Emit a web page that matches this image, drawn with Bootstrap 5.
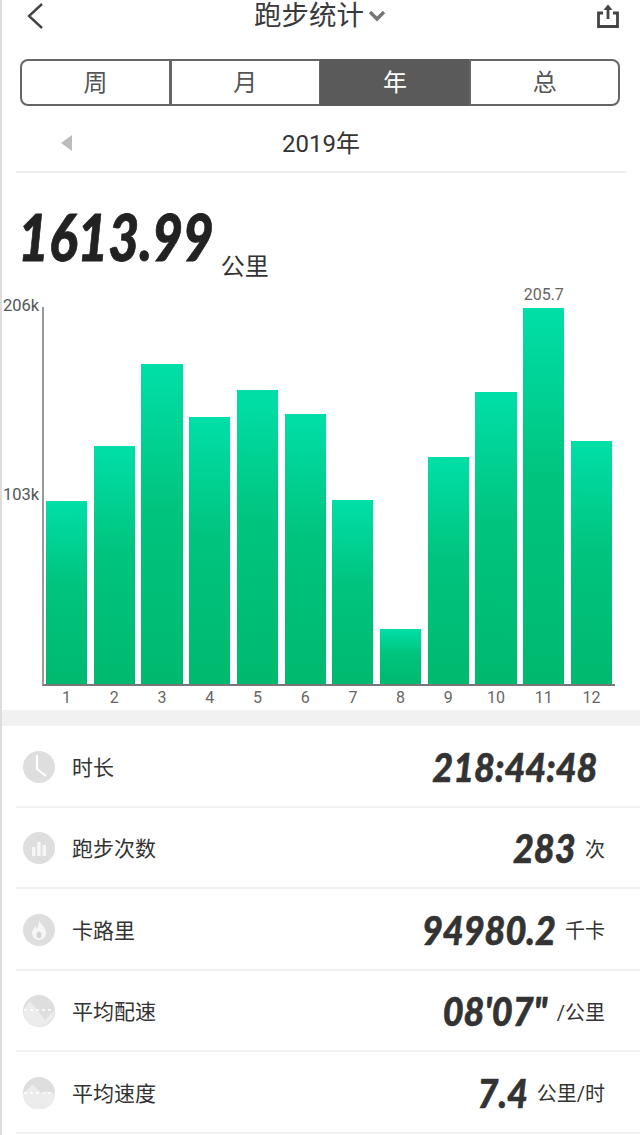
<!DOCTYPE html>
<html lang="zh">
<head>
<meta charset="utf-8">
<title>跑步统计</title>
<link href="https://cdn.jsdelivr.net/npm/bootstrap@5.3.0/dist/css/bootstrap.min.css" rel="stylesheet">
<style>
html,body{margin:0;background:#fff}
body{font-family:"Roboto","Noto Sans CJK SC",sans-serif;color:#333;width:640px;height:1135px;overflow:hidden}
.frame{height:1135px;border-left:2px solid #dcdcdc;overflow:hidden}
.topbar{height:32px;padding:0 20px 0 24px}
.title-txt{font-size:27.5px;line-height:30px;color:#3a3a3a}
.seg{margin:27px 18px 0 18px;height:47px;display:flex;width:600px}
.seg .btn{flex:1;border:2px solid #666;border-radius:0;font-size:24px;line-height:1;color:#555;background:#fff;padding:0;margin-left:-2px}
.seg .btn:first-child{border-radius:8px 0 0 8px;margin-left:0}
.seg .btn:last-child{border-radius:0 8px 8px 0}
.seg .btn.sel{background:#5a5a5a;color:#fff;border-color:#5a5a5a}
.yearline{height:67px;padding-top:10px;margin:0 14px 0 14px;border-bottom:2px solid #eee;font-size:24px;color:#333;position:relative}
.prev-arrow{position:absolute;left:45px;top:29px;width:0;height:0;border-top:8px solid transparent;border-bottom:8px solid transparent;border-right:11px solid #bdbdbd}
.totalrow{padding:28px 0 0 16px;height:115px}
.bignum,.valnum{font-family:"Lato",sans-serif;font-weight:900;font-style:italic;display:inline-block}
.bignum{font-size:65px;line-height:70px;color:#222;-webkit-text-stroke:.8px currentColor;transform:scaleX(.82);transform-origin:left center;margin-right:-44px}
.bigunit{font-size:24px;line-height:28px;margin-left:8px;margin-bottom:7px;color:#333}
.chartzone{position:relative;height:422px;padding-top:19px}
.yaxis-t{position:absolute;left:1px;font-size:16.5px;line-height:18px;color:#555}
.barsbox{margin-left:40px;width:573px;height:379px;border-left:2px solid #999;border-bottom:2px solid #777;padding:0 3px 0 2px;gap:6.6px}
.onebar{flex:1;background:linear-gradient(180deg,#00dfa8 0%,#00c47e 45%,#00b96f 100%);position:relative}
.barlabel{position:absolute;top:-22px;left:-4px;right:-4px;text-align:center;font-size:16px;line-height:18px;color:#666}
.xlabels{margin-left:42px;width:571px;padding:3px 3px 0 2px;gap:6.6px;font-size:16px;line-height:18px;color:#666}
.xlabels span{flex:1;text-align:center}
.greyband{height:16px;background:#f1f1f1}
.statrow{height:81.5px;margin-left:14px;border-bottom:2px solid #f1f1f1;padding:2px 35px 0 7px}
.staticon{width:32px;height:32px;flex:none}
.statlabel{font-size:21px;color:#333;margin-left:17px;margin-top:3px;line-height:1}
.valnum{font-size:40px;line-height:44px;color:#333;-webkit-text-stroke:.6px currentColor;transform:scaleX(.9);transform-origin:right center}
.valunit{font-size:20px;line-height:24px;color:#333;margin-left:9px;margin-top:3px}
.nounit{margin-right:8px}
</style>
</head>
<body>
<div class="frame">
  <div class="topbar d-flex justify-content-between align-items-center">
    <svg width="18" height="26" viewBox="0 0 18 26" fill="none" stroke="#444" stroke-width="2.4"><path d="M16 1 3 13l13 12"/></svg>
    <div class="d-flex align-items-center gap-1">
      <span class="title-txt">跑步统计</span>
      <svg width="18" height="12" viewBox="0 0 18 12" fill="none" stroke="#777" stroke-width="3.4"><path d="M2 2l7 7 7-7"/></svg>
    </div>
    <svg width="24" height="25" viewBox="0 0 24 25" fill="none" stroke="#444" stroke-width="2.8"><path d="M7 9H2.500v13.500h19V9H17"/><path d="M12 15V3"/><path d="M12 .5 7.500 6h9z" fill="#444" stroke="none"/></svg>
  </div>
  <div class="seg btn-group" role="group">
    <button type="button" class="btn">周</button>
    <button type="button" class="btn">月</button>
    <button type="button" class="btn sel">年</button>
    <button type="button" class="btn">总</button>
  </div>
  <div class="yearline d-flex align-items-center justify-content-center">
    <span class="prev-arrow"></span><span>2019年</span>
  </div>
  <div class="totalrow d-flex align-items-start">
    <span class="bignum">1613.99</span><span class="bigunit align-self-end">公里</span>
  </div>
  <div class="chartzone">
    <span class="yaxis-t" style="top:9px">206k</span>
    <span class="yaxis-t" style="top:198px">103k</span>
    <div class="barsbox d-flex align-items-end">
      <div class="onebar" style="height:183px"></div>
      <div class="onebar" style="height:238px"></div>
      <div class="onebar" style="height:320px"></div>
      <div class="onebar" style="height:267px"></div>
      <div class="onebar" style="height:294px"></div>
      <div class="onebar" style="height:270px"></div>
      <div class="onebar" style="height:184px"></div>
      <div class="onebar" style="height:55px"></div>
      <div class="onebar" style="height:227px"></div>
      <div class="onebar" style="height:292px"></div>
      <div class="onebar" style="height:376px"><span class="barlabel">205.7</span></div>
      <div class="onebar" style="height:243px"></div>
    </div>
    <div class="xlabels d-flex">
      <span>1</span><span>2</span><span>3</span><span>4</span><span>5</span><span>6</span><span>7</span><span>8</span><span>9</span><span>10</span><span>11</span><span>12</span>
    </div>
  </div>
  <div class="greyband"></div>

  <div class="statrow d-flex align-items-center">
    <svg class="staticon" viewBox="0 0 32 32"><circle cx="16" cy="16" r="16" fill="#dedede"/><path d="M14 4v14l9 7" fill="none" stroke="#fff" stroke-width="2.2"/></svg>
    <span class="statlabel">时长</span>
    <span class="ms-auto valnum nounit">218:44:48</span>
  </div>
  <div class="statrow d-flex align-items-center">
    <svg class="staticon" viewBox="0 0 32 32"><circle cx="16" cy="16" r="16" fill="#dedede"/><g fill="#f6f6f6"><rect x="9" y="15" width="3.5" height="9"/><rect x="14.2" y="10" width="3.5" height="14"/><rect x="19.5" y="13" width="3.5" height="11"/></g></svg>
    <span class="statlabel">跑步次数</span>
    <span class="ms-auto valnum">283</span>
    <span class="valunit">次</span>
  </div>
  <div class="statrow d-flex align-items-center">
    <svg class="staticon" viewBox="0 0 32 32"><circle cx="16" cy="16" r="16" fill="#dedede"/><path d="M16 6c1 4 7 7 7 13a7 7 0 0 1-14 0c0-3 2-4 3-7 1 1 1.500 2 2 3 1-3 2-6 2-9z" fill="#f6f6f6"/><ellipse cx="16" cy="21" rx="2.500" ry="3.200" fill="#d4d4d4"/></svg>
    <span class="statlabel">卡路里</span>
    <span class="ms-auto valnum">94980.2</span>
    <span class="valunit">千卡</span>
  </div>
  <div class="statrow d-flex align-items-center">
    <svg class="staticon" viewBox="0 0 32 32"><circle cx="16" cy="16" r="16" fill="#dedede"/><path d="M1 14 7 6l8 10 7 9 9-9a16 16 0 0 1-25 12.500A16 16 0 0 1 1 14z" fill="#ececec"/><path d="M1 15h30" stroke="#fff" stroke-width="1.600" stroke-dasharray="3 3"/></svg>
    <span class="statlabel">平均配速</span>
    <span class="ms-auto valnum">08'07"</span>
    <span class="valunit">/公里</span>
  </div>
  <div class="statrow d-flex align-items-center">
    <svg class="staticon" viewBox="0 0 32 32"><circle cx="16" cy="16" r="16" fill="#dedede"/><path d="M0 17 10 7l9 10 4-3 9 3a16 16 0 0 1-32 0z" fill="#ececec"/><path d="M1 16h30" stroke="#fff" stroke-width="1.600" stroke-dasharray="3 3"/></svg>
    <span class="statlabel">平均速度</span>
    <span class="ms-auto valnum">7.4</span>
    <span class="valunit">公里/时</span>
  </div>
</div>
<script src="https://cdn.jsdelivr.net/npm/bootstrap@5.3.0/dist/js/bootstrap.bundle.min.js"></script>
</body>
</html>
